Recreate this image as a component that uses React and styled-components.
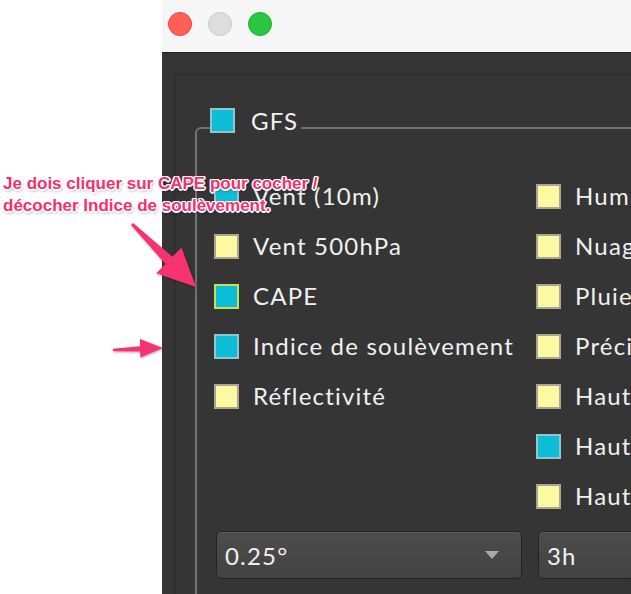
import React from "react";
import styled, { createGlobalStyle } from "styled-components";

const GlobalStyle = createGlobalStyle`
  html, body {
    margin: 0;
    padding: 0;
    background: #ffffff;
  }
  body {
    font-family: "Lato", "Noto Sans", sans-serif;
  }
`;

const Page = styled.div`
  position: relative;
  width: 631px;
  height: 594px;
  overflow: hidden;
  display: flex;
  background: #ffffff;
`;

const Gutter = styled.div`
  flex: 0 0 162px;
`;

const Window = styled.div`
  flex: 0 0 640px;
  display: flex;
  flex-direction: column;
`;

const TitleBar = styled.div`
  height: 52px;
  flex: 0 0 52px;
  box-sizing: border-box;
  background: #f6f6f6;
  display: flex;
  align-items: flex-start;
  gap: 16px;
  padding: 12px 0 0 6px;
`;

const Light = styled.span`
  width: 24px;
  height: 24px;
  box-sizing: border-box;
  border-radius: 50%;
  background: ${(p) => p.$fill};
  border: 1px solid ${(p) => p.$edge};
`;

const Body = styled.div`
  flex: 1;
  background: #353535;
  border-top: 1px solid #1d1d1d;
  padding: 21px 0 0 12px;
`;

const Panel = styled.div`
  height: 100%;
  box-sizing: border-box;
  border-top: 1px solid #2a2a2a;
  border-left: 1px solid #2a2a2a;
  padding: 33px 0 0 20px;
`;

const Group = styled.fieldset`
  margin: 0;
  min-width: 0;
  height: 100%;
  box-sizing: border-box;
  border: 2px solid #727272;
  border-right: none;
  border-bottom: none;
  border-top-left-radius: 6px;
  padding: 0 0 0 17px;
`;

const Legend = styled.legend`
  display: flex;
  align-items: center;
  gap: 16px;
  margin-left: -4px;
  padding: 0 3px 14px 0;
  color: #f2f2f2;
  font-size: 24px;
  letter-spacing: 1.2px;
  line-height: 25px;
`;

const Box = styled.span`
  flex: 0 0 25px;
  width: 25px;
  height: 25px;
  box-sizing: border-box;
  background: ${(p) => (p.$on ? "#0dbcd6" : "#fdf9a3")};
  border: 2px solid
    ${(p) => (p.$focus ? "#c7df52" : p.$on ? "#93c6cc" : "#a9a693")};
`;

const Columns = styled.div`
  display: grid;
  grid-template-columns: 322px 322px;
  padding-top: 24px;
`;

const Column = styled.div`
  display: flex;
  flex-direction: column;
`;

const Item = styled.div`
  height: 50px;
  display: flex;
  align-items: center;
  gap: 14px;
  color: #f0f0f0;
  font-size: 24px;
  letter-spacing: 1.2px;
  white-space: nowrap;
`;

const Label = styled.span`
  margin-top: -2px;
`;

const Selects = styled.div`
  display: flex;
  gap: 16px;
  margin: 10px 0 0 2px;
`;

const Select = styled.div`
  flex: 0 0 ${(p) => p.$w}px;
  height: 48px;
  box-sizing: border-box;
  display: flex;
  align-items: center;
  justify-content: space-between;
  padding: 0 22px 0 8px;
  border: 1px solid #232323;
  border-radius: 5px;
  background: linear-gradient(#4c4c4c, #424242);
  box-shadow: inset 0 1px 0 #5a5a5a;
  color: #f0f0f0;
  font-size: 24px;
  letter-spacing: 1.2px;
`;

const Caret = styled.span`
  width: 0;
  height: 0;
  border-left: 7px solid transparent;
  border-right: 7px solid transparent;
  border-top: 8px solid #a8a8a8;
`;

const Note = styled.div`
  position: absolute;
  left: 3px;
  top: 173px;
  font-family: "Liberation Sans", Arial, sans-serif;
  font-weight: bold;
  font-size: 17px;
  line-height: 22px;
  color: #f5306f;
  text-shadow: -1.5px 0 0 #fff, 1.5px 0 0 #fff, 0 -1.5px 0 #fff, 0 1.5px 0 #fff,
    -1px -1px 0 #fff, 1px -1px 0 #fff, -1px 1px 0 #fff, 1px 1px 0 #fff,
    1px 2px 3px rgba(0, 0, 0, 0.45);
  white-space: nowrap;
`;

const Arrows = styled.svg`
  position: absolute;
  left: 0;
  top: 0;
  pointer-events: none;
`;

const left = [
  { label: "Vent (10m)", on: true },
  { label: "Vent 500hPa" },
  { label: "CAPE", on: true, focus: true },
  { label: "Indice de soulèvement", on: true },
  { label: "Réflectivité" },
];

const right = [
  { label: "Humidité" },
  { label: "Nuages" },
  { label: "Pluie" },
  { label: "Précipitations" },
  { label: "Hauteur" },
  { label: "Hauteur", on: true },
  { label: "Hauteur" },
];

const Row = ({ label, on, focus }) => (
  <Item>
    <Box $on={on} $focus={focus} />
    <Label>{label}</Label>
  </Item>
);

export default function App() {
  return (
    <Page>
      <GlobalStyle />
      <Gutter />
      <Window>
        <TitleBar>
          <Light $fill="#fe5f57" $edge="#e2463f" />
          <Light $fill="#dedede" $edge="#c9c9c9" />
          <Light $fill="#2ac642" $edge="#1eaa2f" />
        </TitleBar>
        <Body>
          <Panel>
            <Group>
              <Legend>
                <Box $on />
                <span>GFS</span>
              </Legend>
              <Columns>
                <Column>
                  {left.map((r, i) => (
                    <Row key={i} {...r} />
                  ))}
                </Column>
                <Column>
                  {right.map((r, i) => (
                    <Row key={i} {...r} />
                  ))}
                </Column>
              </Columns>
              <Selects>
                <Select $w={306}>
                  <span>0.25°</span>
                  <Caret />
                </Select>
                <Select $w={306}>
                  <span>3h</span>
                  <Caret />
                </Select>
              </Selects>
            </Group>
          </Panel>
        </Body>
      </Window>

      <Note>
        Je dois cliquer sur CAPE pour cocher /
        <br />
        décocher Indice de soulèvement.
      </Note>

      <Arrows width="631" height="594" viewBox="0 0 631 594">
        <defs>
          <filter id="drop" x="-20%" y="-20%" width="140%" height="140%">
            <feDropShadow dx="0.5" dy="1" stdDeviation="1" floodOpacity="0.35" />
          </filter>
        </defs>
        <g fill="#f7336f" filter="url(#drop)">
          <polygon points="133,222.9 172.4,256.8 181.5,247.6 196,287 156.3,273.2 165.4,264 131,225.1" />
          <polygon points="113,348.8 140,346.2 140,339 163,348 140.4,357.6 140.2,351.6 113,351.2" />
        </g>
      </Arrows>
    </Page>
  );
}
